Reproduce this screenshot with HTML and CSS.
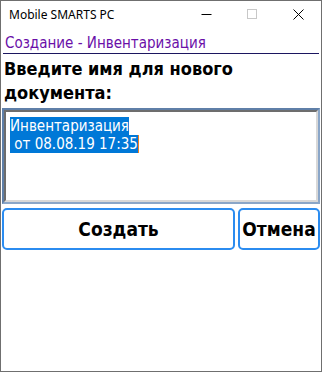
FILE: index.html
```html
<!DOCTYPE html>
<html>
<head>
<meta charset="utf-8">
<link rel="stylesheet" href="styles.css">
</head>
<body>
<div class="window">
  <div class="titlebar">
    <span class="title">Mobile SMARTS PC</span>
    <div class="caption">
      <span class="cbtn"><svg width="11" height="11" viewBox="0 0 11 11"><path d="M0.5 5.5H10.5" stroke="#000" stroke-width="1"/></svg></span>
      <span class="cbtn"><svg width="11" height="11" viewBox="0 0 11 11"><rect x="0.5" y="0.5" width="9" height="9" fill="none" stroke="#c8c8c8" stroke-width="1"/></svg></span>
      <span class="cbtn"><svg width="11" height="11" viewBox="0 0 11 11"><path d="M0.5 0.5L10.5 10.5M10.5 0.5L0.5 10.5" stroke="#000" stroke-width="1"/></svg></span>
    </div>
  </div>
  <div class="content">
    <div class="header">Создание - Инвентаризация</div>
    <div class="prompt">Введите имя для нового документа:</div>
    <div class="textbox">
      <div class="inner">
        <span class="sel">Инвентаризация</span><br><span class="sel">&nbsp;от 08.08.19 17:35</span><span class="caret"></span>
      </div>
    </div>
    <div class="buttons">
      <button class="btn create">Создать</button>
      <button class="btn cancel">Отмена</button>
    </div>
  </div>
</div>
</body>
</html>
```
FILE: styles.css
```css
html, body {
  margin: 0;
  padding: 0;
  background: #fff;
}
.window {
  width: 322px;
  height: 372px;
  box-sizing: border-box;
  border: 1px solid #6f6f6f;
  display: flex;
  flex-direction: column;
  background: #fff;
}
.titlebar {
  height: 29px;
  display: flex;
  align-items: center;
  justify-content: space-between;
}
.title {
  font-family: "Noto Sans", "Open Sans", sans-serif;
  font-size: 12px;
  color: #000;
  padding-left: 8px;
  padding-bottom: 2px;
}
.caption {
  display: flex;
  height: 29px;
}
.cbtn {
  width: 46px;
  display: flex;
  align-items: center;
  justify-content: center;
  padding-bottom: 2px;
}
.content {
  display: flex;
  flex-direction: column;
  padding: 0 1px 0 1px;
}
.header {
  font-family: "DejaVu Sans Condensed", "DejaVu Sans", sans-serif;
  font-size: 15px;
  color: #6a0fa8;
  padding: 4px 0 1px 2px;
  margin: 0 1px;
  border-bottom: 1px solid #1c1660;
  line-height: 18px;
}
.prompt {
  font-family: "DejaVu Sans Condensed", "DejaVu Sans", sans-serif;
  font-weight: bold;
  font-size: 18px;
  line-height: 24px;
  color: #000;
  padding: 3px 0 3px 2px;
}
.textbox {
  height: 96px;
  box-sizing: border-box;
  border: 2px solid;
  border-color: #5f7fa8 #8aa6c8 #8aa6c8 #5f7fa8;
  padding: 0;
  background: #fff;
}
.inner {
  height: 100%;
  box-sizing: border-box;
  border: 2px solid;
  border-color: #6d6d6d #d8d8d8 #d8d8d8 #6d6d6d;
  padding: 5px 4px;
  font-family: "DejaVu Sans Condensed", "DejaVu Sans", sans-serif;
  font-size: 15px;
  line-height: 18px;
}
.sel {
  background: #0078d7;
  color: #fff;
}
.caret {
  display: inline-block;
  width: 1px;
  height: 18px;
  background: #f08020;
  vertical-align: top;
}
.buttons {
  display: flex;
  gap: 3px;
  margin-top: 4px;
}
.btn {
  height: 42px;
  box-sizing: border-box;
  border: 2px solid #2b8cf0;
  border-radius: 5px;
  background: #fff;
  font-family: "DejaVu Sans Condensed", "DejaVu Sans", sans-serif;
  font-weight: bold;
  font-size: 19px;
  color: #000;
  padding: 0;
}
.create {
  flex: 1;
}
.cancel {
  width: 82px;
}
```
